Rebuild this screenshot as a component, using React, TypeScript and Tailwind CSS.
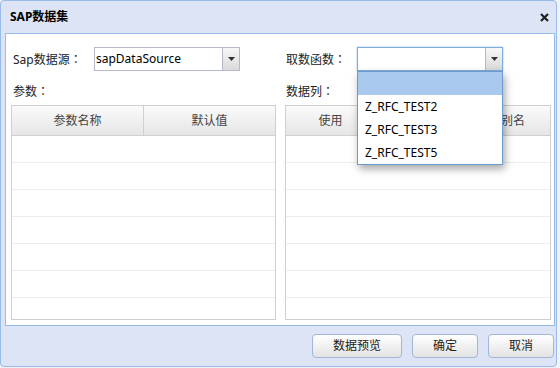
import React from "react"

const font = { fontFamily: '"Noto Sans", "Noto Sans CJK SC", sans-serif' }

function Colon() {
  return <span style={{ fontFamily: '"Noto Sans CJK TC", sans-serif' }}>：</span>
}

function Trigger() {
  return (
    <div className="w-[17px] h-full border-l border-[#b5b8c8] bg-gradient-to-b from-[#f7f7f7] to-[#dadada] flex items-center justify-center">
      <svg width="7" height="4" viewBox="0 0 7 4">
        <path d="M0 0 L7 0 L3.5 4 Z" fill="#333" />
      </svg>
    </div>
  )
}

function Combo({ value, focused }: { value?: string; focused?: boolean }) {
  return (
    <div
      className={
        "w-[146px] h-[24px] flex bg-white border " +
        (focused ? "border-[#7eadd9] shadow-[0_0_2px_#9ec3e6]" : "border-[#b5b8c8]")
      }
    >
      <div className="flex-1 flex items-center pl-[1px] text-[12px] text-black leading-none">{value}</div>
      <Trigger />
    </div>
  )
}

function Grid({ cols }: { cols: { label: string; w: string }[] }) {
  const rows = [0, 1, 2, 3, 4, 5, 6]
  return (
    <div className="h-[215px] border border-[#cfcfcf] bg-white overflow-hidden">
      <div className="h-[30px] flex border-b border-[#d0d0d0] bg-gradient-to-b from-[#fafafa] to-[#e6e6e6]">
        {cols.map((c, i) => (
          <div
            key={i}
            className={
              c.w +
              " flex items-center justify-center text-[12px] text-[#444] " +
              (i < cols.length - 1 ? "border-r border-[#d0d0d0]" : "")
            }
          >
            {c.label}
          </div>
        ))}
      </div>
      {rows.map((r) => (
        <div key={r} className="h-[27px] border-b border-[#ededed]" />
      ))}
    </div>
  )
}

function Btn({ label, w }: { label: string; w: string }) {
  return (
    <button
      className={
        w +
        " h-[24px] rounded-[4px] border border-[#a2b7d4] bg-gradient-to-b from-white to-[#e3e3e3] text-[12px] text-[#222] flex items-center justify-center"
      }
    >
      {label}
    </button>
  )
}

export default function App() {
  const funcs = ["Z_RFC_TEST2", "Z_RFC_TEST3", "Z_RFC_TEST5"]

  return (
    <div className="w-[560px] h-[368px] bg-[#f1f2f5]" style={font}>
      <div className="w-[557px] h-[367px] bg-[#dde4f6] border border-[#99bbe8] rounded-[4px] flex flex-col">
        {/* Title */}
        <div className="h-[32px] flex items-center justify-between pl-[9px] pr-[7px]">
          <span className="text-[12px] font-bold text-black">SAP数据集</span>
          <svg width="9" height="9" viewBox="0 0 9 9">
            <path d="M1 1 L8 8 M8 1 L1 8" stroke="#222" strokeWidth="2.2" />
          </svg>
        </div>

        {/* Body */}
        <div className="ml-[4px] w-[550px] h-[293px] bg-white border border-[#99bbe8] pl-[5px] pt-[13px]">
          <div className="grid grid-cols-[265px_266px] gap-x-[9px]">
            {/* Left */}
            <div>
              <div className="h-[24px] flex items-center">
                <span className="w-[81px] ml-[2px] text-[12px] text-[#222]">
                  Sap数据源<Colon />
                </span>
                <Combo value="sapDataSource" />
              </div>
              <div className="h-[34px] flex items-end pb-[5px] pl-[2px] text-[12px] text-[#222] leading-[16px]">
                <span>
                  参数<Colon />
                </span>
              </div>
              <Grid
                cols={[
                  { label: "参数名称", w: "w-[132px]" },
                  { label: "默认值", w: "flex-1" },
                ]}
              />
            </div>

            {/* Right */}
            <div>
              <div className="h-[24px] flex items-center">
                <span className="w-[71px] ml-[1px] text-[12px] text-[#222]">
                  取数函数<Colon />
                </span>
                <div className="relative">
                  <Combo focused />
                  <div className="absolute top-full left-0 w-[146px] h-[94px] bg-white border border-[#6d9bd0] shadow-[2px_4px_8px_rgba(0,0,0,0.35)] z-10">
                    <div className="h-[23px] bg-[#a9c8ee]" />
                    {funcs.map((f) => (
                      <div key={f} className="h-[23px] flex items-center pl-[7px] text-[12px] text-black">
                        {f}
                      </div>
                    ))}
                  </div>
                </div>
              </div>
              <div className="h-[34px] flex items-end pb-[5px] pl-[1px] text-[12px] text-[#222] leading-[16px]">
                <span>
                  数据列<Colon />
                </span>
              </div>
              <Grid
                cols={[
                  { label: "使用", w: "w-[90px]" },
                  { label: "", w: "w-[100px]" },
                  { label: "别名", w: "flex-1" },
                ]}
              />
            </div>
          </div>
        </div>

        {/* Footer */}
        <div className="flex-1 flex items-start justify-end gap-[10px] pt-[8px] pr-[2px]">
          <Btn label="数据预览" w="w-[90px]" />
          <Btn label="确定" w="w-[66px]" />
          <Btn label="取消" w="w-[66px]" />
        </div>
      </div>
    </div>
  )
}
